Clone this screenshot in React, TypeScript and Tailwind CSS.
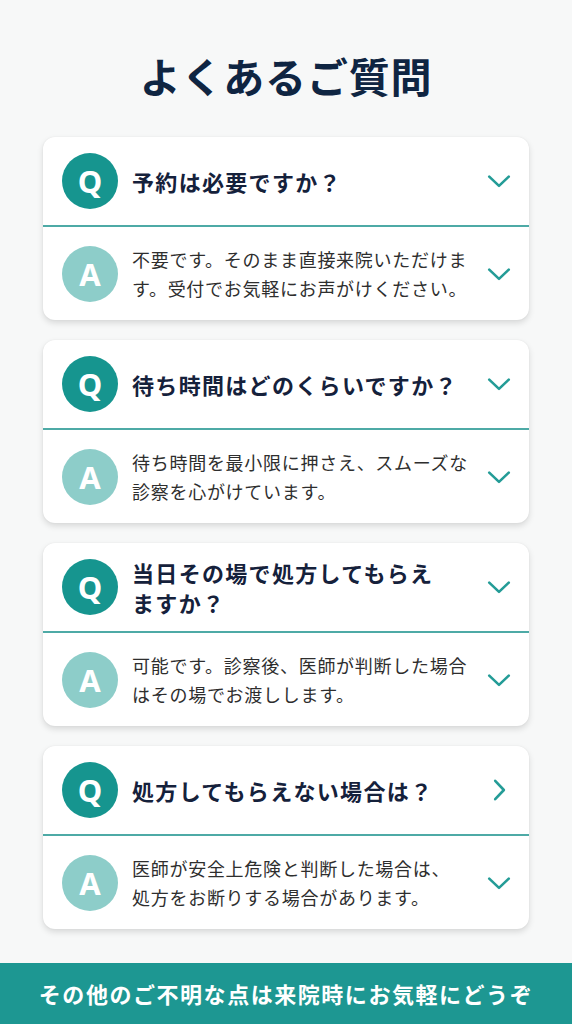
import React from "react";

type Item = { q: React.ReactNode; a: React.ReactNode; right?: boolean };

const items: Item[] = [
  {
    q: "予約は必要ですか？",
    a: (
      <>
        不要です。そのまま直接来院いただけま
        <br />
        す。受付でお気軽にお声がけください。
      </>
    ),
  },
  {
    q: "待ち時間はどのくらいですか？",
    a: (
      <>
        待ち時間を最小限に押さえ、スムーズな
        <br />
        診察を心がけています。
      </>
    ),
  },
  {
    q: (
      <>
        当日その場で処方してもらえ
        <br />
        ますか？
      </>
    ),
    a: (
      <>
        可能です。診察後、医師が判断した場合
        <br />
        はその場でお渡しします。
      </>
    ),
  },
  {
    q: "処方してもらえない場合は？",
    right: true,
    a: (
      <>
        医師が安全上危険と判断した場合は、
        <br />
        処方をお断りする場合があります。
      </>
    ),
  },
];

function Chevron({ right }: { right?: boolean }) {
  return (
    <svg width="26" height="26" viewBox="0 0 24 24" fill="none" stroke="#249c97" strokeWidth="2.4" strokeLinecap="round" strokeLinejoin="round">
      {right ? <path d="M8.5 3.5l8 8.5-8 8.5" /> : <path d="M3 8l9 8.5 9-8.5" />}
    </svg>
  );
}

export default function App() {
  const font = { fontFamily: '"Noto Sans CJK JP", "Noto Sans", sans-serif' };
  return (
    <div className="w-[572px] h-[1024px] bg-[#f7f8f8] flex flex-col overflow-hidden" style={font}>
      <h1 className="pt-[51px] text-center text-[41px] leading-[48px] font-bold text-[#0f2542] tracking-[0.02em]">
        よくあるご質問
      </h1>
      <div className="mt-[38px] px-[43px] flex flex-col gap-[20px]">
        {items.map((it, i) => (
          <div key={i} className="bg-white rounded-[12px] shadow-[0_3px_6px_rgba(0,0,0,0.13),0_0_2px_rgba(0,0,0,0.06)] overflow-hidden">
            <div className="flex items-center py-[14px] pl-[19px] pr-[16px] min-h-[88px]">
              <div className="w-[56px] h-[56px] rounded-full bg-[#16958f] flex items-center justify-center text-white text-[31px] font-bold shrink-0 leading-none" style={{ fontFamily: '"Noto Sans", sans-serif' }}>
                Q
              </div>
              <div className="ml-[14px] flex-1 text-[22px] leading-[30px] font-bold text-[#15213b] tracking-[0.06em]">
                {it.q}
              </div>
              <div className="w-[28px] flex justify-center">
                <Chevron right={it.right} />
              </div>
            </div>
            <div className="h-[2px] bg-[#4eaaa6]" />
            <div className="flex items-center pt-[18px] pb-[17px] pl-[19px] pr-[16px]">
              <div className="w-[56px] h-[56px] rounded-full bg-[#8dcdc9] flex items-center justify-center text-white text-[31px] font-bold shrink-0 leading-none" style={{ fontFamily: '"Noto Sans", sans-serif' }}>
                A
              </div>
              <div className="ml-[14px] flex-1 text-[18px] leading-[29px] text-[#2e2e2e] tracking-[0.04em]">
                {it.a}
              </div>
              <div className="w-[28px] flex justify-center">
                <Chevron />
              </div>
            </div>
          </div>
        ))}
      </div>
      <div className="mt-auto h-[61px] bg-[#1d9792] flex items-center justify-center text-white text-[22px] font-bold tracking-[0.07em]">
        その他のご不明な点は来院時にお気軽にどうぞ
      </div>
    </div>
  );
}
